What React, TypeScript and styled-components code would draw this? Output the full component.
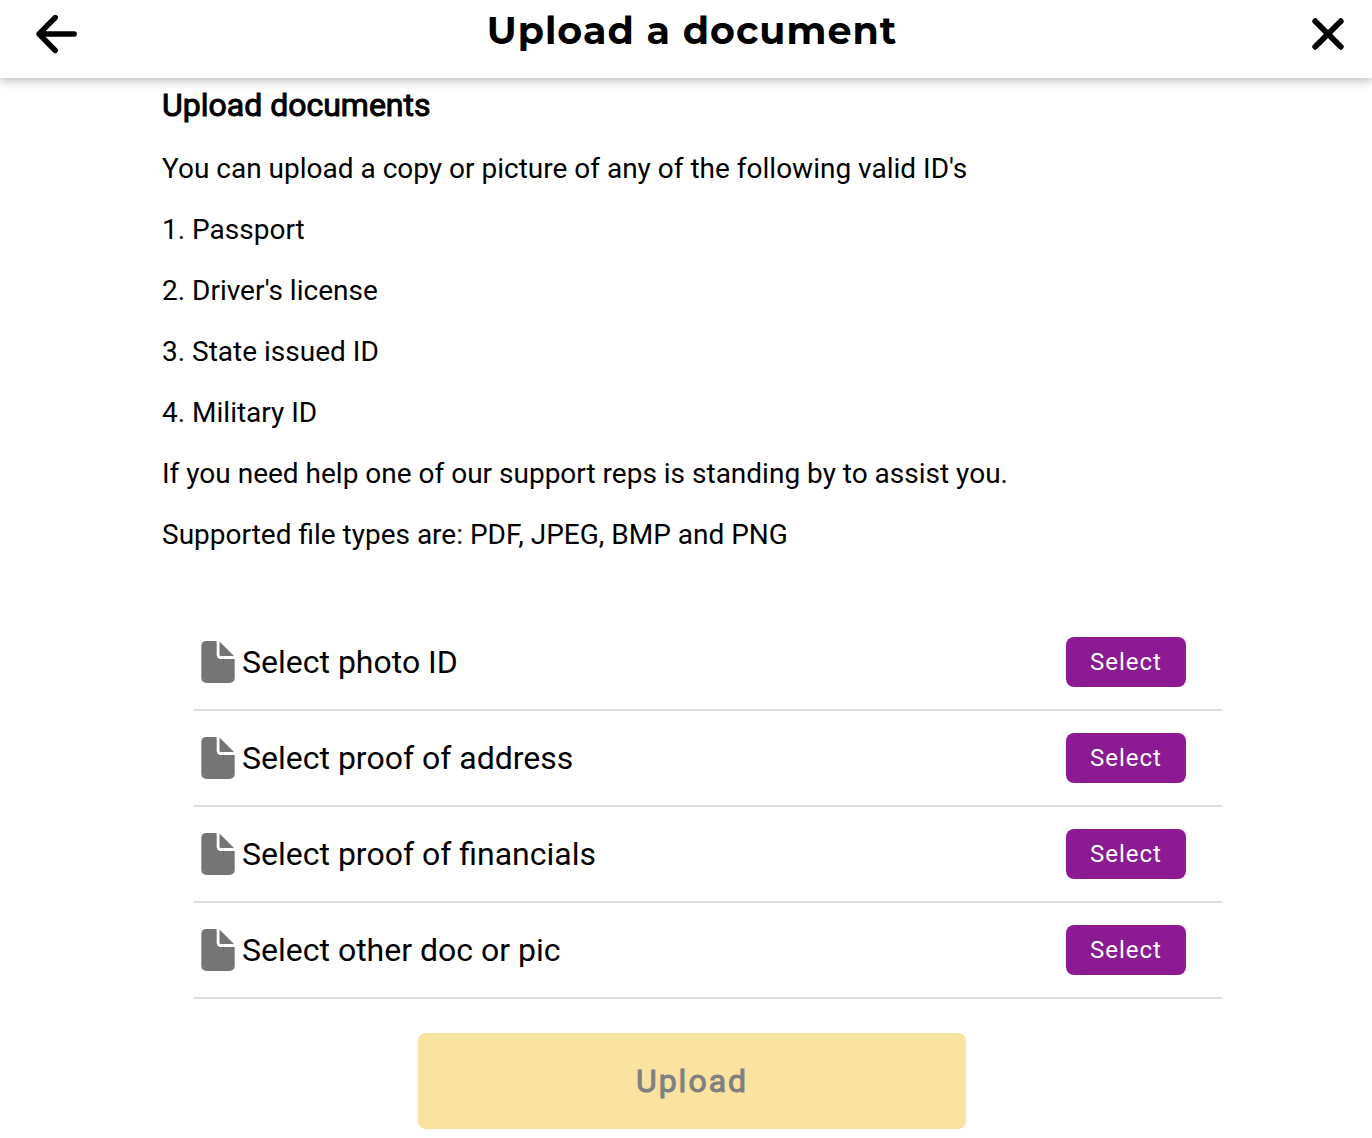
import React from "react";
import styled, { createGlobalStyle } from "styled-components";

const GlobalStyle = createGlobalStyle`
  * { box-sizing: border-box; }
  body { margin: 0; background: #fff; color: #000; font-family: Roboto, sans-serif; }
`;

const Page = styled.div`
  min-height: 100vh;
  overflow-x: hidden;
`;

const Header = styled.header`
  display: flex;
  align-items: center;
  justify-content: space-between;
  height: 78px;
  padding: 0 24px 10px 32px;
  box-shadow: 0 4px 8px rgba(0, 0, 0, 0.22);
`;

const Title = styled.h1`
  margin: 0;
  padding: 0 4px 6px 0;
  font: 700 38px/48px Montserrat, Lato, sans-serif;
  letter-spacing: 1px;
`;

const IconButton = styled.button`
  display: flex;
  padding: 0;
  border: 0;
  background: none;
  cursor: pointer;
`;

const Content = styled.main`
  max-width: 1072px;
  margin: 0 auto;
  padding: 8px 0 8px 12px;
`;

const Heading = styled.h2`
  margin: 0 0 24px;
  font-size: 32px;
  line-height: 38px;
  font-weight: 400;
  -webkit-text-stroke: 1px currentColor;
`;

const Text = styled.p`
  margin: 0 0 19px;
  font-size: 28px;
  line-height: 42px;
`;

const DocumentList = styled.ul`
  margin: 59px 0 0;
  padding: 0 0 0 32px;
  list-style: none;
`;

const DocumentRow = styled.li`
  display: flex;
  align-items: center;
  height: 96px;
  padding: 0 36px 0 0;
  border-bottom: 2px solid #dedede;
`;

const DocumentName = styled.span`
  flex: 1;
  font-size: 32px;
  line-height: 48px;
`;

const SelectButton = styled.button`
  width: 120px;
  height: 50px;
  border: 0;
  border-radius: 8px;
  background: #8b1a93;
  color: #fff;
  font: 400 24px/32px Roboto, sans-serif;
  letter-spacing: 1px;
  cursor: pointer;
`;

const UploadButton = styled.button`
  display: block;
  width: 548px;
  max-width: 100%;
  height: 96px;
  margin: 34px auto 0;
  border: 0;
  border-radius: 8px;
  background: #fae2a0;
  color: #808080;
  font: 400 32px/40px Roboto, sans-serif;
  letter-spacing: 2px;
  -webkit-text-stroke: 1px currentColor;
`;

const documents = ["Select photo ID", "Select proof of address", "Select proof of financials", "Select other doc or pic"];
const lines = [
  "You can upload a copy or picture of any of the following valid ID's",
  "1. Passport",
  "2. Driver's license",
  "3. State issued ID",
  "4. Military ID",
  "If you need help one of our support reps is standing by to assist you.",
  "Supported file types are: PDF, JPEG, BMP and PNG",
];

const FileIcon = () => (
  <svg width="48" height="48" viewBox="0 0 48 48" fill="#757575" aria-hidden="true">
    <path d="M12.5 3h10.2v13.5q0 4.5 4.5 4.5h13.5v18.5q0 5.4-5.4 5.4H12.7q-5.4 0-5.4-5.4V8.2q0-5.2 5.2-5.2Z" />
    <path d="M25.5 3.5L40 18H27q-1.5 0-1.5-1.5Z" />
  </svg>
);

export default function App() {
  return (
    <Page>
      <GlobalStyle />
      <Header>
        <IconButton aria-label="Back">
          <svg width="48" height="48" viewBox="0 0 48 48" fill="none" stroke="#000" strokeWidth="5.4" strokeLinecap="round" strokeLinejoin="round">
            <path d="M42.2 24H7M23.3 7.5L7 24l16.3 16.5" />
          </svg>
        </IconButton>
        <Title>Upload a document</Title>
        <IconButton aria-label="Close">
          <svg width="40" height="40" viewBox="0 0 40 40" fill="none" stroke="#000" strokeWidth="5.8" strokeLinecap="round">
            <path d="M7.2 7.2l25.6 25.6M32.8 7.2L7.2 32.8" />
          </svg>
        </IconButton>
      </Header>
      <Content>
        <Heading>Upload documents</Heading>
        {lines.map((line) => <Text key={line}>{line}</Text>)}
        <DocumentList>
          {documents.map((name) => (
            <DocumentRow key={name}>
              <FileIcon />
              <DocumentName>{name}</DocumentName>
              <SelectButton aria-label={name}>Select</SelectButton>
            </DocumentRow>
          ))}
        </DocumentList>
        <UploadButton disabled>Upload</UploadButton>
      </Content>
    </Page>
  );
}
